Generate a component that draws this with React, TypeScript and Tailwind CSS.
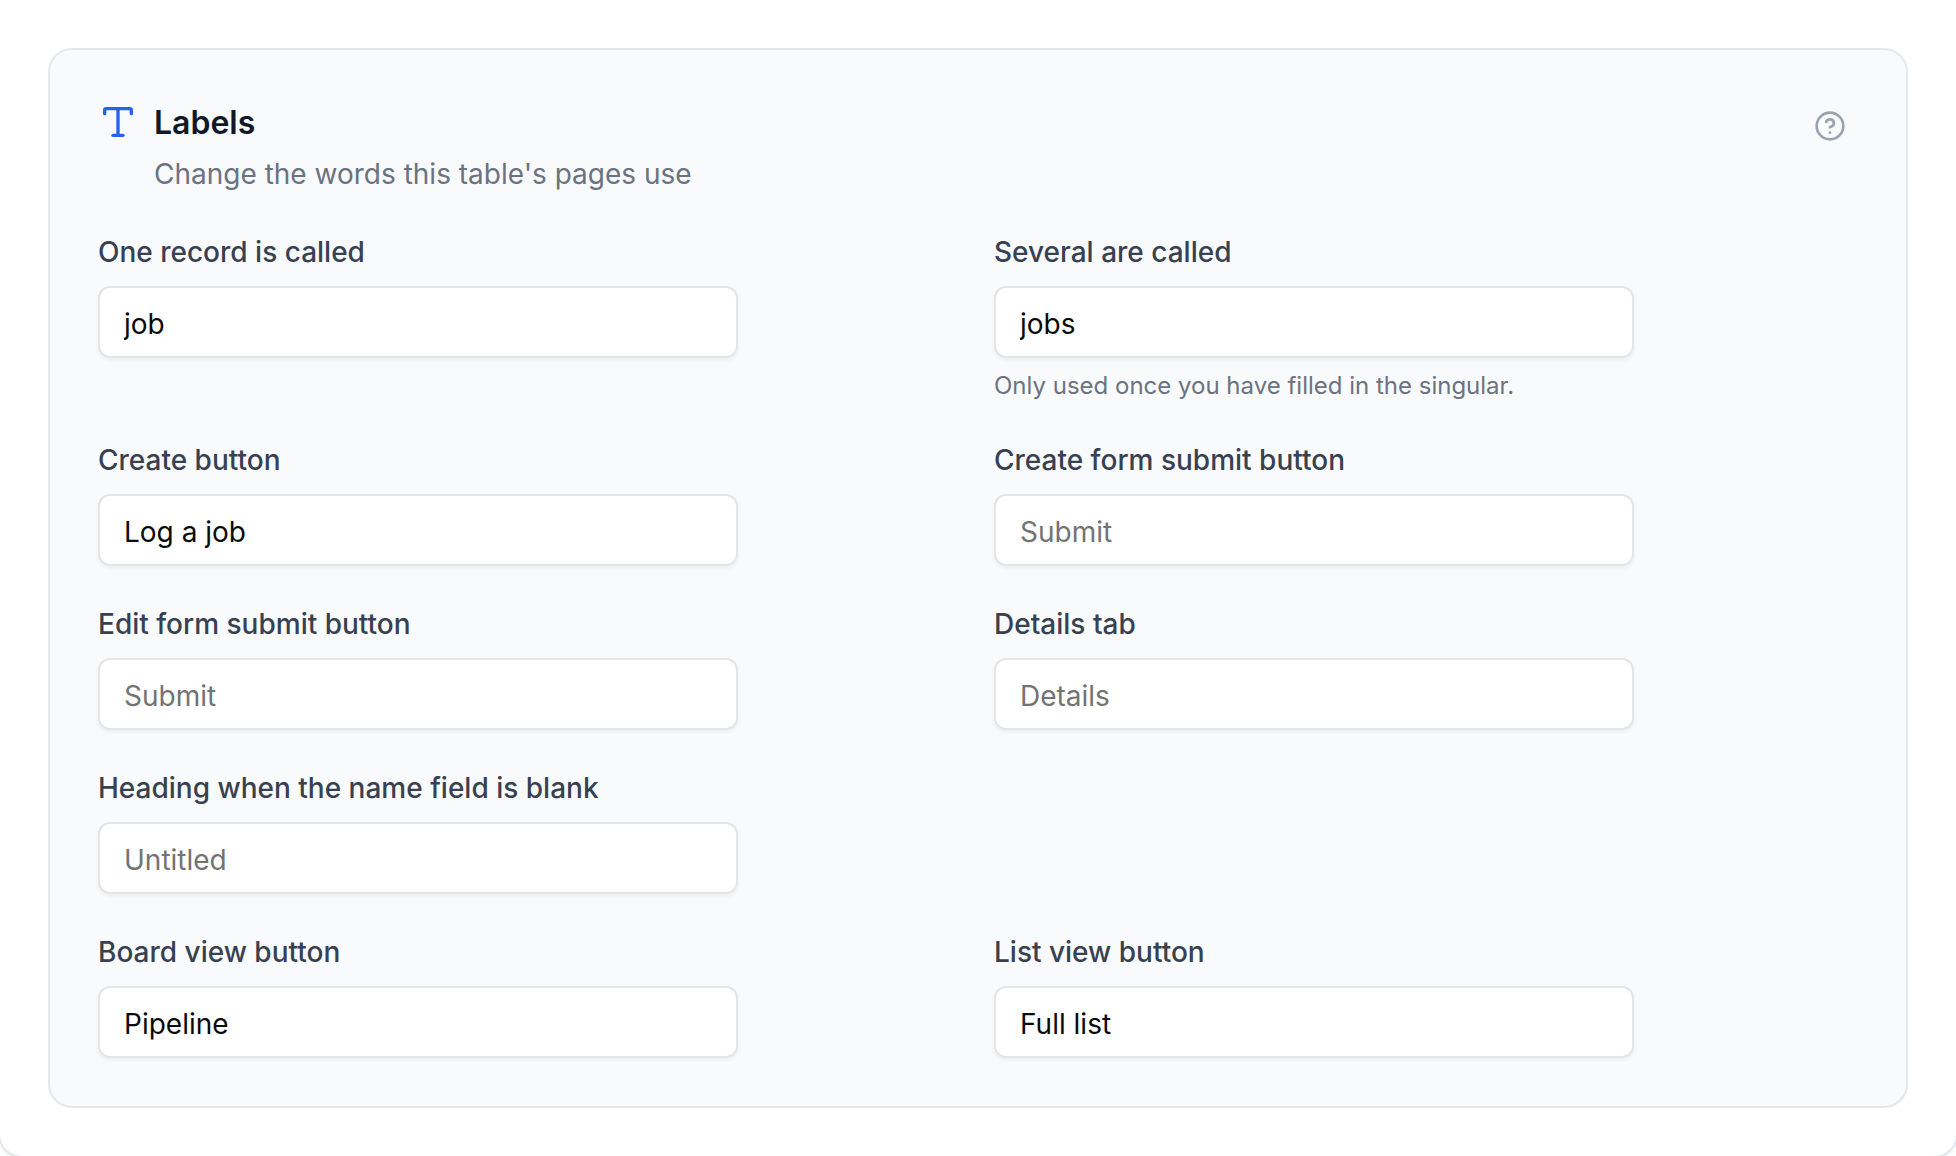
import { CircleHelp, Type } from "lucide-react";

type Field = {
  id: string;
  label: string;
  value?: string;
  placeholder?: string;
  hint?: string;
  alone?: boolean;
};

const FIELDS: Field[] = [
  { id: "singular", label: "One record is called", value: "job" },
  {
    id: "plural",
    label: "Several are called",
    value: "jobs",
    hint: "Only used once you have filled in the singular.",
  },
  { id: "create-button", label: "Create button", value: "Log a job" },
  { id: "create-submit", label: "Create form submit button", placeholder: "Submit" },
  { id: "edit-submit", label: "Edit form submit button", placeholder: "Submit" },
  { id: "details-tab", label: "Details tab", placeholder: "Details" },
  {
    id: "blank-heading",
    label: "Heading when the name field is blank",
    placeholder: "Untitled",
    alone: true,
  },
  { id: "board-button", label: "Board view button", value: "Pipeline" },
  { id: "list-button", label: "List view button", value: "Full list" },
];

function LabelField({ id, label, value, placeholder, hint, alone }: Field) {
  return (
    <>
      <div>
        <label htmlFor={id} className="block text-[28px] leading-9 font-medium text-[#374151]">
          {label}
        </label>
        <input
          id={id}
          type="text"
          defaultValue={value}
          placeholder={placeholder}
          aria-describedby={hint ? `${id}-hint` : undefined}
          className="mt-4 block h-18 w-full max-w-160 rounded-xl border-2 border-neutral-200 bg-white px-6 pt-1 text-[28px] text-neutral-950 shadow-[0_2px_4px_rgba(0,0,0,0.05)] outline-none placeholder:text-neutral-500 focus-visible:border-[#2563eb]"
        />
        {hint ? (
          <p id={`${id}-hint`} className="mt-3 text-2xl leading-8 text-[#6b7280]">
            {hint}
          </p>
        ) : null}
      </div>
      {/* keeps the next pair on a row of its own */}
      {alone ? <div className="hidden sm:block" /> : null}
    </>
  );
}

export default function App() {
  return (
    <main className="min-h-screen overflow-hidden bg-white font-['Inter',sans-serif]">
      <div className="-mx-0.5 min-h-screen rounded-b-3xl border-x-2 border-b-2 border-[#e5e7eb] bg-white p-12 shadow-[0_2px_4px_rgba(0,0,0,0.05)]">
        <section className="rounded-3xl border-2 border-[#e5e7eb] bg-[#f9fafb] p-12">
          <header className="flex h-24 items-start justify-between">
            <div>
              <div className="flex items-start gap-4">
                <Type className="mt-1 size-10 text-[#2563eb]" />
                <h2 className="text-[32px] leading-[50px] font-semibold text-[#111827]">Labels</h2>
              </div>
              <p className="mt-[6px] ml-14 text-[28px] leading-10 text-[#6b7280]">
                Change the words this table's pages use
              </p>
            </div>
            <button type="button" aria-label="About labels" className="p-3 text-[#9ca3af]">
              <CircleHelp className="size-8" />
            </button>
          </header>
          <div className="mt-10 grid grid-cols-1 gap-x-8 gap-y-10 sm:grid-cols-2">
            {FIELDS.map((field) => (
              <LabelField key={field.id} {...field} />
            ))}
          </div>
        </section>
      </div>
    </main>
  );
}
